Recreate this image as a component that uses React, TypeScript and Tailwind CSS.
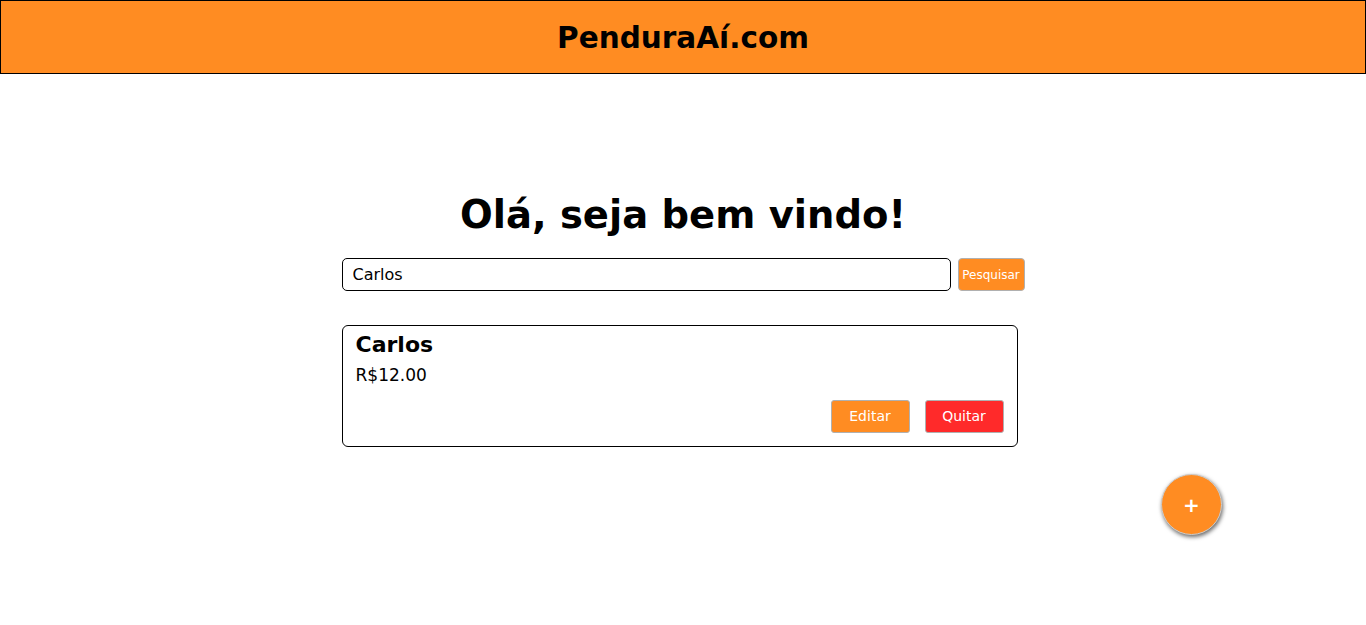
export default function App() {
  return (
    <div className="min-h-[625px] bg-white font-['DejaVu_Sans',sans-serif] text-black">
      {/* Header */}
      <header className="h-[74px] border border-black bg-[#ff8c22] flex items-center justify-center pt-[4px]">
        <h1 className="text-[29.5px] font-bold leading-none">PenduraAí.com</h1>
      </header>

      <main className="w-[683px] mx-auto pt-[118px]">
        <h2 className="text-center text-[38.5px] font-bold leading-[46px]">Olá, seja bem vindo!</h2>

        {/* Search */}
        <div className="mt-[20px] flex gap-[7px]">
          <input
            defaultValue="Carlos"
            className="h-[33px] w-[610px] rounded-[5px] border border-black px-[10px] text-[16px] outline-none font-['DejaVu_Sans',sans-serif]"
          />
          <button className="h-[33px] w-[67px] rounded-[4px] border border-[#b0b0b0] bg-[#ff8c22] text-[12px] text-white">
            Pesquisar
          </button>
        </div>

        {/* Result card */}
        <div className="mt-[34px] w-[676px] rounded-[6px] border border-black px-[13px] pt-[6px] pb-[13px]">
          <div className="text-[22px] font-bold leading-[26px]">Carlos</div>
          <div className="mt-[6px] text-[17px] leading-[22px]">R$12.00</div>
          <div className="mt-[14px] flex justify-end gap-[15px]">
            <button className="h-[33px] w-[79px] rounded-[3px] border border-[#b0b0b0] bg-[#ff8c22] text-[14px] text-white">
              Editar
            </button>
            <button className="h-[33px] w-[79px] rounded-[3px] border border-[#b0b0b0] bg-[#ff2a2a] text-[14px] text-white">
              Quitar
            </button>
          </div>
        </div>
      </main>

      {/* Floating add button */}
      <button className="absolute left-[1161px] top-[474px] h-[61px] w-[61px] rounded-full border border-[#cccccc] bg-[#ff8c22] text-[20px] font-bold leading-none text-white shadow-[1px_2px_4px_rgba(0,0,0,0.6)]">
        +
      </button>
    </div>
  );
}
